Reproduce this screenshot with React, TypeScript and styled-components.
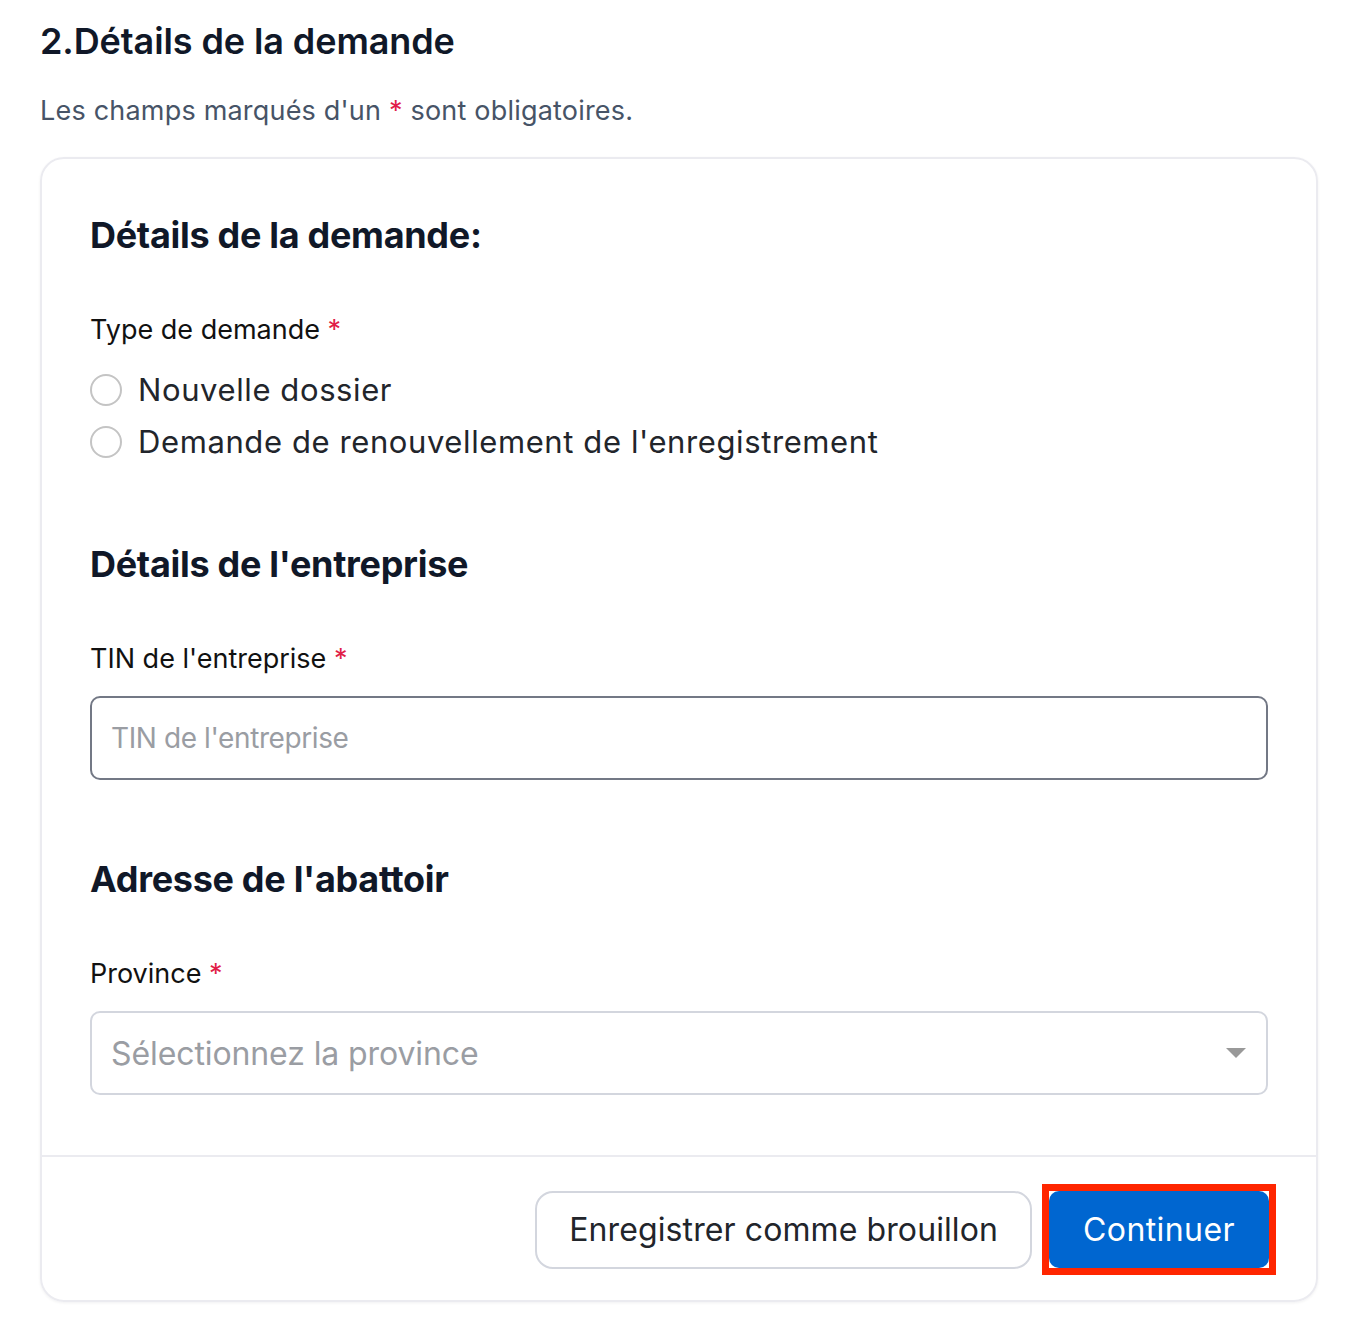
import styled, { createGlobalStyle } from "styled-components";

const GlobalStyle = createGlobalStyle`
    body {
        margin: 0;
        background: #fff;
        font-family: Inter, "Noto Sans", sans-serif;
    }
`;

const Page = styled.div`
    padding: 18px 39px 18px 40px;
`;

const Title = styled.h1`
    margin: 0;
    font-size: 36px;
    font-weight: 600;
    line-height: 46px;
    color: #101828;
    letter-spacing: -0.1px;
`;

const Subtitle = styled.p`
    margin: 30px 0 0;
    font-size: 27px;
    line-height: 34px;
    color: #475467;
    letter-spacing: 0.2px;
`;

const Required = styled.span`
    color: #e11d48;
`;

const Card = styled.div`
    margin-top: 29px;
    border: 2px solid #ebebf0;
    border-radius: 24px;
    box-shadow: 0 1px 3px rgba(16, 24, 40, 0.06);
`;

const CardBody = styled.div`
    padding: 52px 48px 60px;
`;

const SectionTitle = styled.h2<{ $gap: number }>`
    margin: ${(p) => p.$gap}px 0 0;
    font-size: 36px;
    font-weight: 700;
    line-height: 48px;
    color: #101828;
    letter-spacing: -0.3px;
`;

const Label = styled.div`
    margin-top: 54px;
    font-size: 27px;
    line-height: 34px;
    color: #111;
    letter-spacing: 0;
`;

const RadioList = styled.div`
    margin-top: 23px;
    display: flex;
    flex-direction: column;
    gap: 12px;
`;

const RadioRow = styled.label`
    display: flex;
    align-items: center;
    gap: 16px;
    font-size: 31px;
    line-height: 40px;
    color: #22252b;
    letter-spacing: 0.6px;
`;

const RadioCircle = styled.span`
    width: 28px;
    height: 28px;
    border: 2px solid #c4c4c4;
    border-radius: 50%;
    flex: none;
`;

const Field = styled.div<{ $tone: "dark" | "light" }>`
    margin-top: 20px;
    height: 80px;
    border: 2px solid ${(p) => (p.$tone === "dark" ? "#737885" : "#d3d6de")};
    border-radius: 10px;
    display: flex;
    align-items: center;
    justify-content: space-between;
    padding: 0 20px 0 19px;
`;

const Placeholder = styled.span<{ $size: number; $spacing: number }>`
    font-size: ${(p) => p.$size}px;
    color: #9a9da3;
    letter-spacing: ${(p) => p.$spacing}px;
`;

const Caret = styled.span`
    width: 0;
    height: 0;
    border-left: 10px solid transparent;
    border-right: 10px solid transparent;
    border-top: 10px solid #999;
`;

const Footer = styled.div`
    border-top: 2px solid #ebebf0;
    padding: 27px 40px 25px;
    display: flex;
    justify-content: flex-end;
    align-items: center;
    gap: 10px;
`;

const DraftButton = styled.button`
    height: 78px;
    padding: 0 32px;
    border: 2px solid #d3d6de;
    border-radius: 18px;
    background: #fff;
    font-family: inherit;
    font-size: 32px;
    color: #22252b;
    letter-spacing: 0.1px;
`;

const Highlight = styled.span`
    display: inline-flex;
    border: 7px solid #ff2600;
`;

const PrimaryButton = styled.button`
    width: 220px;
    height: 77px;
    border: none;
    border-radius: 10px;
    background: #0066d0;
    font-family: inherit;
    font-size: 32px;
    color: #fff;
    letter-spacing: 0.4px;
`;

export default function App() {
    return (
        <Page>
            <GlobalStyle />
            <Title>2.Détails de la demande</Title>
            <Subtitle>
                Les champs marqués d'un <Required>*</Required> sont obligatoires.
            </Subtitle>
            <Card>
                <CardBody>
                    <SectionTitle $gap={0}>Détails de la demande:</SectionTitle>
                    <Label>
                        Type de demande <Required>*</Required>
                    </Label>
                    <RadioList>
                        <RadioRow>
                            <RadioCircle />
                            Nouvelle dossier
                        </RadioRow>
                        <RadioRow>
                            <RadioCircle />
                            Demande de renouvellement de l'enregistrement
                        </RadioRow>
                    </RadioList>

                    <SectionTitle $gap={78}>Détails de l'entreprise</SectionTitle>
                    <Label>
                        TIN de l'entreprise <Required>*</Required>
                    </Label>
                    <Field $tone="dark">
                        <Placeholder $size={28} $spacing={-0.4}>
                            TIN de l'entreprise
                        </Placeholder>
                    </Field>

                    <SectionTitle $gap={75}>Adresse de l'abattoir</SectionTitle>
                    <Label>
                        Province <Required>*</Required>
                    </Label>
                    <Field $tone="light">
                        <Placeholder $size={32} $spacing={-0.1}>
                            Sélectionnez la province
                        </Placeholder>
                        <Caret />
                    </Field>
                </CardBody>
                <Footer>
                    <DraftButton>Enregistrer comme brouillon</DraftButton>
                    <Highlight>
                        <PrimaryButton>Continuer</PrimaryButton>
                    </Highlight>
                </Footer>
            </Card>
        </Page>
    );
}
